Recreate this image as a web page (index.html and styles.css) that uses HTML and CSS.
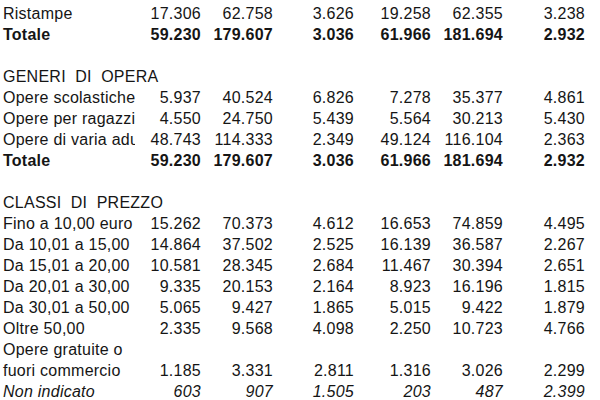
FILE: index.html
```html
<!DOCTYPE html>
<html lang="it">
<head>
<meta charset="utf-8">
<title>Tabella</title>
<link rel="stylesheet" href="styles.css">
</head>
<body>
<div class="sheet">
  <div class="row"><div class="lab">Ristampe</div><div>17.306</div><div>62.758</div><div>3.626</div><div>19.258</div><div>62.355</div><div>3.238</div></div>
  <div class="row bold"><div class="lab">Totale</div><div>59.230</div><div>179.607</div><div>3.036</div><div>61.966</div><div>181.694</div><div>2.932</div></div>
  <div class="row"></div>
  <div class="row"><div class="lab head">GENERI  DI  OPERA</div></div>
  <div class="row"><div class="lab">Opere scolastiche</div><div>5.937</div><div>40.524</div><div>6.826</div><div>7.278</div><div>35.377</div><div>4.861</div></div>
  <div class="row"><div class="lab">Opere per ragazzi</div><div>4.550</div><div>24.750</div><div>5.439</div><div>5.564</div><div>30.213</div><div>5.430</div></div>
  <div class="row"><div class="lab">Opere di varia adulti</div><div>48.743</div><div>114.333</div><div>2.349</div><div>49.124</div><div>116.104</div><div>2.363</div></div>
  <div class="row bold"><div class="lab">Totale</div><div>59.230</div><div>179.607</div><div>3.036</div><div>61.966</div><div>181.694</div><div>2.932</div></div>
  <div class="row"></div>
  <div class="row"><div class="lab head">CLASSI  DI  PREZZO</div></div>
  <div class="row"><div class="lab">Fino a 10,00 euro</div><div>15.262</div><div>70.373</div><div>4.612</div><div>16.653</div><div>74.859</div><div>4.495</div></div>
  <div class="row"><div class="lab">Da 10,01 a 15,00</div><div>14.864</div><div>37.502</div><div>2.525</div><div>16.139</div><div>36.587</div><div>2.267</div></div>
  <div class="row"><div class="lab">Da 15,01 a 20,00</div><div>10.581</div><div>28.345</div><div>2.684</div><div>11.467</div><div>30.394</div><div>2.651</div></div>
  <div class="row"><div class="lab">Da 20,01 a 30,00</div><div>9.335</div><div>20.153</div><div>2.164</div><div>8.923</div><div>16.196</div><div>1.815</div></div>
  <div class="row"><div class="lab">Da 30,01 a 50,00</div><div>5.065</div><div>9.427</div><div>1.865</div><div>5.015</div><div>9.422</div><div>1.879</div></div>
  <div class="row"><div class="lab">Oltre 50,00</div><div>2.335</div><div>9.568</div><div>4.098</div><div>2.250</div><div>10.723</div><div>4.766</div></div>
  <div class="row tall"><div class="lab wrap">Opere gratuite o fuori commercio</div><div>1.185</div><div>3.331</div><div>2.811</div><div>1.316</div><div>3.026</div><div>2.299</div></div>
  <div class="row ital"><div class="lab">Non indicato</div><div>603</div><div>907</div><div>1.505</div><div>203</div><div>487</div><div>2.399</div></div>
</div>
</body>
</html>
```
FILE: styles.css
```css
html, body {
  margin: 0;
  padding: 0;
  background: #ffffff;
}
body {
  font-family: "Liberation Sans", Arial, sans-serif;
  font-size: 16px;
  letter-spacing: 0.25px;
  color: #151515;
}
.sheet {
  padding-top: 3px;
  width: 585px;
}
.row {
  display: grid;
  grid-template-columns: 135px 66px 72px 81px 77px 72px 82px;
  height: 21px;
  line-height: 21px;
  align-items: end;
}
.row > div {
  text-align: right;
  white-space: nowrap;
}
.row > .lab {
  text-align: left;
  padding-left: 3px;
  overflow: hidden;
  white-space: pre;
}
.row > .head {
  overflow: visible;
  grid-column: 1 / span 3;
}
.bold { font-weight: bold; }
.ital { font-style: italic; }
.tall { height: 42px; }
.row > .wrap {
  white-space: normal;
}
```
